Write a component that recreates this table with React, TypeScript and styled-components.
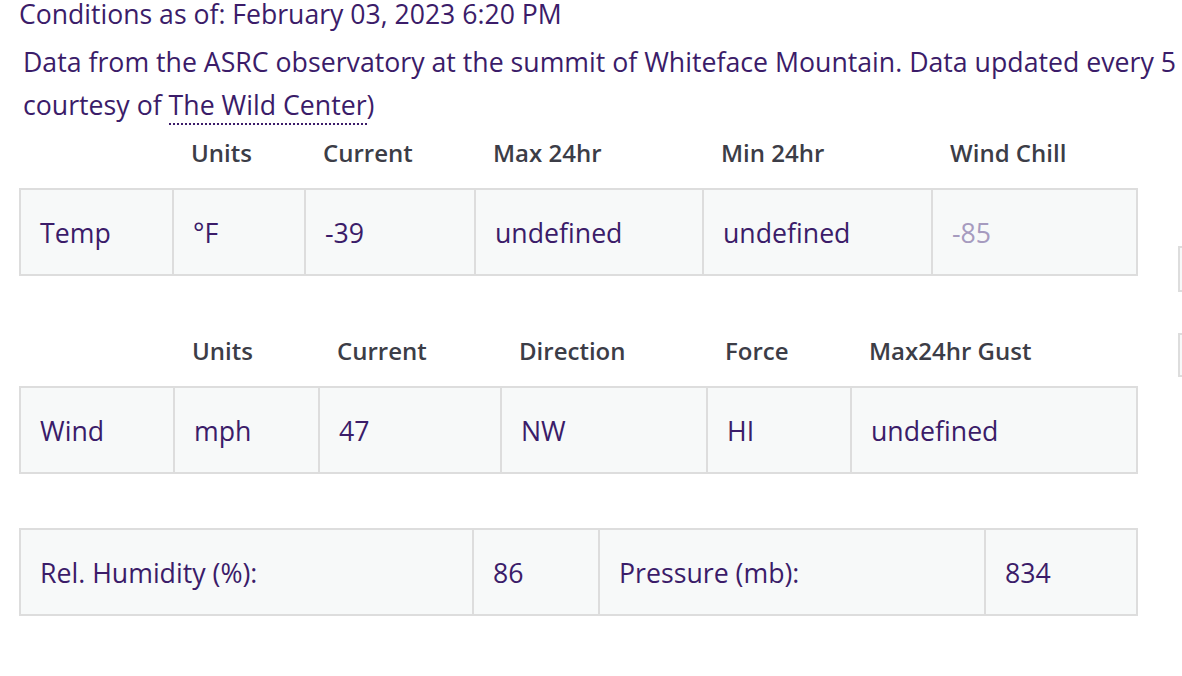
import React from "react";
import styled, { createGlobalStyle } from "styled-components";

const Global = createGlobalStyle`
  html, body { margin: 0; padding: 0; background: #ffffff; overflow: hidden; }
  body { font-family: "Open Sans", "Noto Sans", sans-serif; }
`;

const PURPLE = "#3b1c69";
const HEAD = "#3c3d47";
const BORDER = "#dddddd";
const CELLBG = "#f7f9f9";

const Page = styled.div`
  display: flex;
  flex-direction: row;
  width: 1600px;
`;

const Main = styled.div`
  flex: 0 0 auto;
  width: 1159px;
  padding-left: 19px;
  display: flex;
  flex-direction: column;
`;

const Side = styled.div`
  flex: 0 0 auto;
  width: 300px;
  padding-top: 246px;
  display: flex;
  flex-direction: column;
  gap: 41px;
`;

const SideBox = styled.div<{ $h: number }>`
  height: ${(p) => p.$h}px;
  border: 2px solid ${BORDER};
  background: ${CELLBG};
  box-sizing: border-box;
`;

const Title = styled.div`
  color: ${PURPLE};
  font-size: 26.6px;
  line-height: 28px;
  white-space: nowrap;
`;

const Intro = styled.p`
  margin: 12px 0 8px 4px;
  color: ${PURPLE};
  font-size: 26.7px;
  line-height: 43px;
  white-space: nowrap;
`;

const Link = styled.a`
  color: ${PURPLE};
  text-decoration: none;
  border-bottom: 2px dotted ${PURPLE};
`;

const HeaderRow = styled.div<{ $cols: string; $top: number }>`
  display: grid;
  grid-template-columns: ${(p) => p.$cols};
  column-gap: 2px;
  padding: 0 2px;
  margin-top: ${(p) => p.$top}px;
  height: 36px;
  align-items: center;
`;

const HeadCell = styled.div`
  padding-left: 17px;
  color: ${HEAD};
  font-size: 24px;
  font-weight: 600;
  white-space: nowrap;
`;

const Table = styled.div<{ $cols: string; $top: number }>`
  display: grid;
  grid-template-columns: ${(p) => p.$cols};
  gap: 2px;
  padding: 2px;
  width: 1119px;
  box-sizing: border-box;
  background: ${BORDER};
  margin-top: ${(p) => p.$top}px;
`;

const Cell = styled.div<{ $muted?: boolean }>`
  background: ${CELLBG};
  height: 84px;
  display: flex;
  align-items: center;
  padding-left: 19px;
  color: ${(p) => (p.$muted ? "#a69bbf" : PURPLE)};
  font-size: 26.7px;
  white-space: nowrap;
`;

const tempCols = "151px 130px 168px 226px 227px 203px";
const windCols = "152px 143px 180px 204px 142px 284px";
const miscCols = "451px 124px 384px 150px";

export default function App() {
  return (
    <>
      <Global />
      <Page>
        <Main>
          <Title>Conditions as of: February 03, 2023 6:20 PM</Title>
          <Intro>
            Data from the ASRC observatory at the summit of Whiteface Mountain. Data updated every 5 minutes. (Webcam
            <br />
            courtesy of <Link href="#">The Wild Center</Link>)
          </Intro>

          <HeaderRow $cols={tempCols} $top={0}>
            <HeadCell />
            <HeadCell>Units</HeadCell>
            <HeadCell>Current</HeadCell>
            <HeadCell>Max 24hr</HeadCell>
            <HeadCell>Min 24hr</HeadCell>
            <HeadCell>Wind Chill</HeadCell>
          </HeaderRow>
          <Table $cols={tempCols} $top={18}>
            <Cell>Temp</Cell>
            <Cell>°F</Cell>
            <Cell>-39</Cell>
            <Cell>undefined</Cell>
            <Cell>undefined</Cell>
            <Cell $muted>-85</Cell>
          </Table>

          <HeaderRow $cols={windCols} $top={56}>
            <HeadCell />
            <HeadCell>Units</HeadCell>
            <HeadCell>Current</HeadCell>
            <HeadCell>Direction</HeadCell>
            <HeadCell>Force</HeadCell>
            <HeadCell>Max24hr Gust</HeadCell>
          </HeaderRow>
          <Table $cols={windCols} $top={18}>
            <Cell>Wind</Cell>
            <Cell>mph</Cell>
            <Cell>47</Cell>
            <Cell>NW</Cell>
            <Cell>HI</Cell>
            <Cell>undefined</Cell>
          </Table>

          <Table $cols={miscCols} $top={54}>
            <Cell>Rel. Humidity (%):</Cell>
            <Cell>86</Cell>
            <Cell>Pressure (mb):</Cell>
            <Cell>834</Cell>
          </Table>
        </Main>
        <Side>
          <SideBox $h={46} />
          <SideBox $h={44} />
        </Side>
      </Page>
    </>
  );
}
